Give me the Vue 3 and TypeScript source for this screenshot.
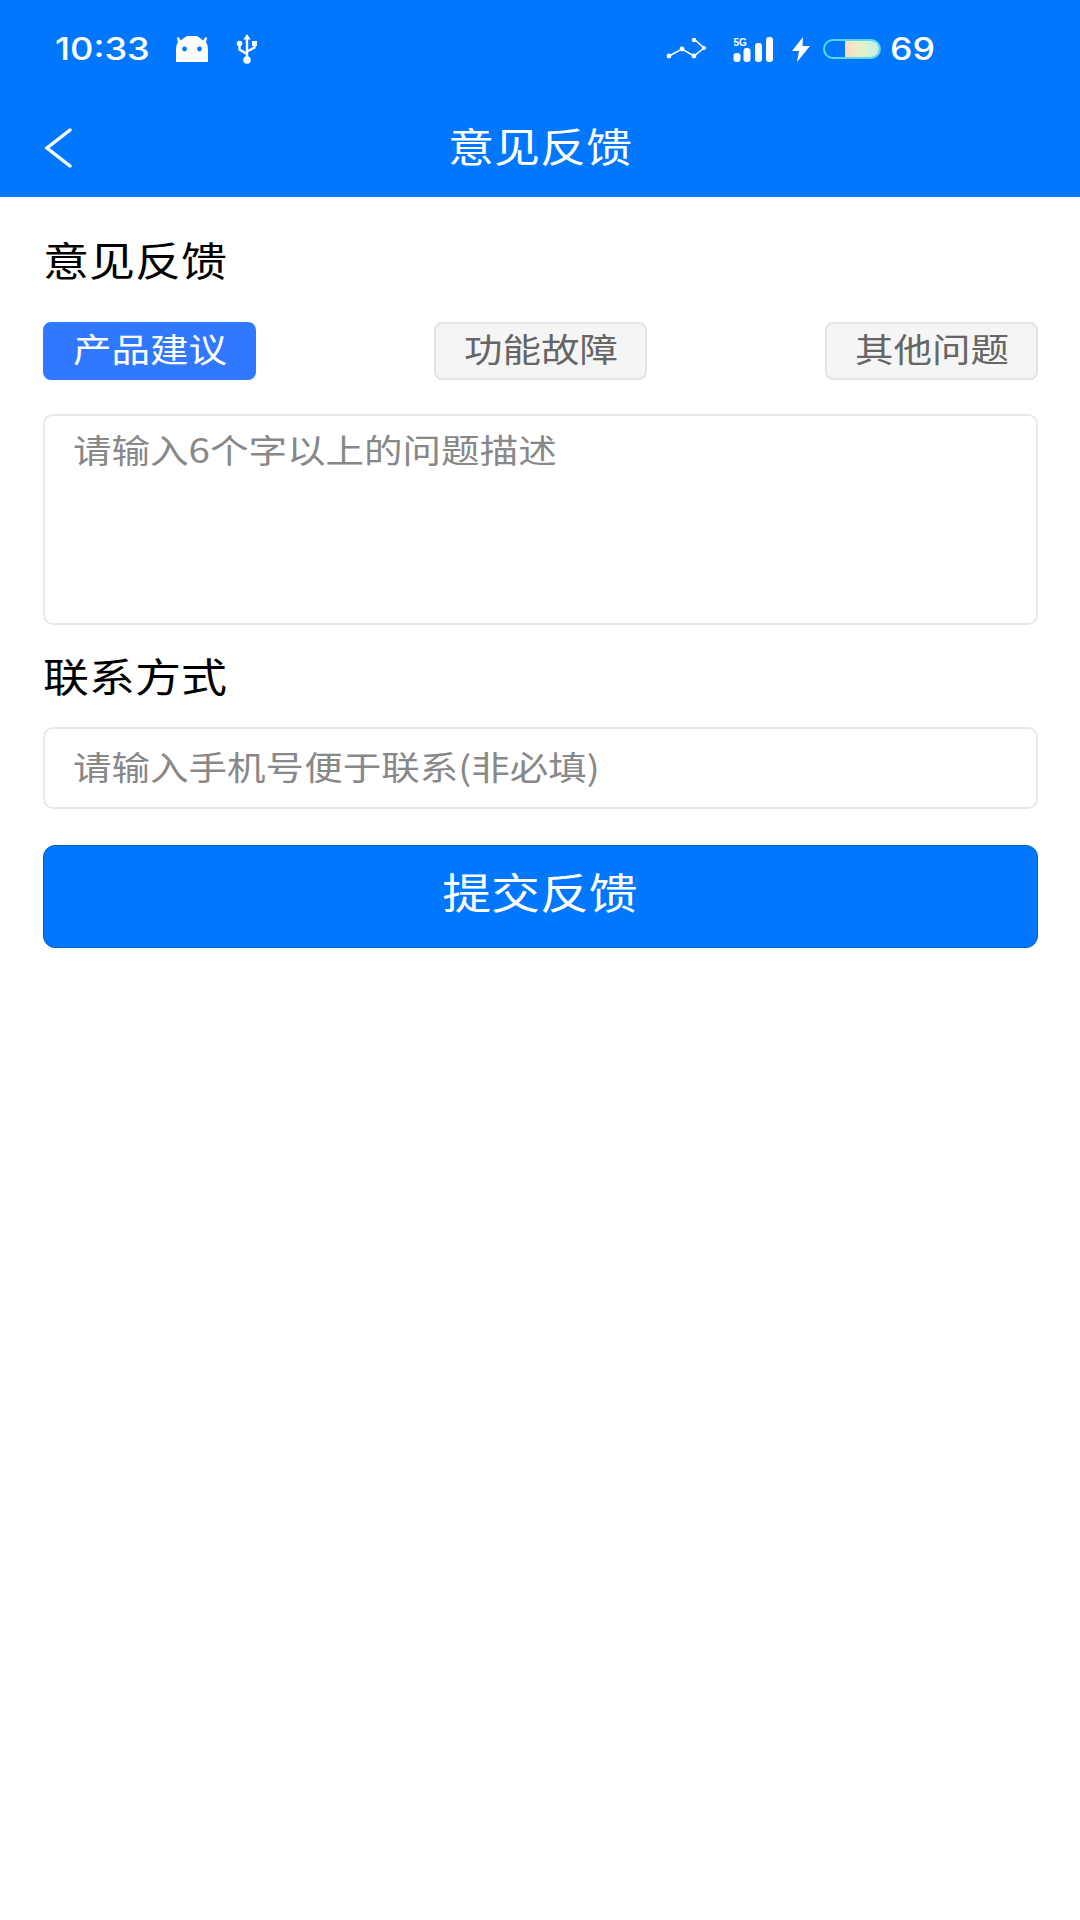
<script setup lang="ts">
import { ref } from "vue";

const tabs = ["产品建议", "功能故障", "其他问题"];
const active = ref(0);
</script>

<template>
  <div class="page">
    <header class="top">
      <div class="status">
        <span class="time">10:33</span>
        <svg class="ic-android" width="32" height="26" viewBox="0 0 32 26">
          <path d="M2 6 L0.8 2 L2.6 1 L5 4.6 A14 14 0 0 1 27 4.6 L29.4 1 L31.2 2 L30 6 Q32 9 32 13 L32 26 L0 26 L0 13 Q0 9 2 6 Z" fill="#fff" />
          <circle cx="8.5" cy="13" r="2.4" fill="#0177fe" />
          <circle cx="23.5" cy="13" r="2.4" fill="#0177fe" />
        </svg>
        <svg class="ic-usb" width="24" height="30" viewBox="0 0 24 30">
          <path d="M12 0 L15.6 5.5 L8.4 5.5 Z" fill="#fff" />
          <path d="M12 5 L12 25 M12 20 L4.5 15.5 L4.5 11 M12 17.5 L19.5 13.5 L19.5 11" stroke="#fff" stroke-width="2.4" fill="none" />
          <circle cx="4.5" cy="9.5" r="2.8" fill="#fff" />
          <rect x="17" y="7" width="5" height="5" fill="#fff" />
          <circle cx="12" cy="26" r="3.8" fill="#fff" />
        </svg>

        <div class="status-right">
          <svg class="ic-net" width="40" height="22" viewBox="0 0 40 22">
            <path d="M3 18 L16 11 L28 18 L38 10 L28 1" stroke="#fff" stroke-width="1.5" fill="none" />
            <circle cx="3" cy="18" r="2.4" fill="#fff" />
            <circle cx="16" cy="11" r="2.4" fill="#fff" />
            <circle cx="28" cy="18" r="2.4" fill="#fff" />
            <circle cx="38" cy="10" r="2" fill="#fff" />
            <circle cx="28" cy="2" r="2.2" fill="#fff" />
          </svg>
          <svg class="ic-signal" width="41" height="25" viewBox="0 0 41 25">
            <text x="0.5" y="8.5" class="fiveg">5G</text>
            <rect x="0.5" y="16" width="7" height="9" rx="3" fill="#fff" />
            <rect x="10.5" y="11" width="7" height="14" rx="3" fill="#fff" />
            <rect x="22" y="6" width="7" height="19" rx="3" fill="#fff" />
            <rect x="33" y="0" width="7" height="25" rx="3" fill="#fff" />
          </svg>
          <svg class="ic-bolt" width="18" height="25" viewBox="0 0 18 25">
            <path d="M11 0 L0 14 L7 14 L5 25 L18 9 L10.5 9 Z" fill="#fff" />
          </svg>
          <div class="battery"><div class="battery-fill"></div></div>
          <span class="level">69</span>
        </div>
      </div>
      <div class="nav">
        <svg class="back" width="28" height="40" viewBox="0 0 28 40">
          <path d="M26 2 L3 20 L26 38" stroke="#fff" stroke-width="3.4" stroke-linecap="round" stroke-linejoin="miter" fill="none" />
        </svg>
        <span class="nav-title wide-c">意见反馈</span>
      </div>
    </header>

    <main class="form">
      <div class="label"><span class="wide-l">意见反馈</span></div>
      <div class="tabs">
        <div
          v-for="(tab, i) in tabs"
          :key="tab"
          :class="['tab', { '--active': i === active }]"
          @click="active = i"
        >
          <span class="wide-c">{{ tab }}</span>
        </div>
      </div>
      <div class="field --area"><span class="wide-l">请输入6个字以上的问题描述</span></div>
      <div class="label --second"><span class="wide-l">联系方式</span></div>
      <div class="field --line"><span class="wide-l">请输入手机号便于联系(非必填)</span></div>
      <div class="submit"><span class="wide-c">提交反馈</span></div>
    </main>
  </div>
</template>

<style scoped>
.page {
  width: 1080px;
  height: 1920px;
  background: #fff;
  font-family: "Noto Sans CJK SC", "Noto Sans", sans-serif;
  overflow: hidden;
}

/* the reference is stretched sideways, so text is widened to fit */
.wide-l,
.wide-c,
.time,
.level {
  display: inline-block;
  white-space: nowrap;
}
.wide-l,
.wide-c {
  transform: translateY(-3px) scaleX(1.15);
}
.time,
.level {
  transform: scaleX(1.15);
  transform-origin: left center;
}
.wide-l {
  transform-origin: left center;
}
.wide-c {
  transform-origin: center;
}

.top {
  height: 197px;
  background: #0177fe;
  color: #fff;
}

.status {
  height: 98px;
  display: flex;
  align-items: center;
  padding-left: 55px;
  font-family: Inter, "Liberation Sans", sans-serif;
}

.time {
  width: 121px;
  font-size: 31.5px;
  font-weight: 500;
  line-height: 40px;
}

.ic-usb {
  margin-left: 27px;
}

.status-right {
  margin-left: auto;
  width: 414px;
  display: flex;
  align-items: center;
}

.ic-signal {
  margin-left: 27px;
}

.ic-bolt {
  margin-left: 18px;
}

.fiveg {
  font-family: "Liberation Sans", sans-serif;
  font-size: 10px;
  font-weight: 700;
  fill: #fff;
}

.battery {
  margin-left: 13px;
  width: 58px;
  height: 20px;
  box-sizing: border-box;
  border: 2px solid #5fd6e6;
  border-radius: 10px;
  overflow: hidden;
  display: flex;
  justify-content: flex-end;
}

.battery-fill {
  width: 34px;
  background: linear-gradient(90deg, #fbd9bf, #e8f0c8 40%, #c4f0e6);
}

.level {
  margin-left: 9px;
  font-size: 31px;
  font-weight: 500;
  line-height: 40px;
}

.nav {
  height: 99px;
  display: flex;
  align-items: center;
  justify-content: center;
  position: relative;
}

.back {
  position: absolute;
  left: 44px;
  top: 30px;
}

.nav-title {
  font-size: 40px;
  line-height: 50px;
}

.form {
  padding: 40px 42px 0 43px;
}

.label {
  height: 50px;
  font-size: 40px;
  line-height: 50px;
  color: #000;
}

.label.--second {
  margin-top: 28px;
}

.tabs {
  margin-top: 35px;
  display: flex;
  justify-content: space-between;
}

.tab {
  width: 213px;
  height: 58px;
  padding-bottom: 2px;
  box-sizing: border-box;
  border: 2px solid #e3e3e3;
  border-radius: 8px;
  background: #f5f5f5;
  color: #666;
  font-size: 33.5px;
  display: flex;
  align-items: center;
  justify-content: center;
}

.tab.--active {
  background: #2f78ff;
  border-color: #2f78ff;
  color: #fff;
}

.field {
  box-sizing: border-box;
  border: 2px solid #e8e8e8;
  border-radius: 10px;
  background: #fff;
  color: #888;
  font-size: 33.5px;
  padding-left: 28px;
}

.field.--area {
  margin-top: 34px;
  height: 211px;
  padding-top: 12px;
  line-height: 48px;
}

.field.--line {
  margin-top: 24px;
  height: 82px;
  display: flex;
  align-items: center;
}

.submit {
  margin-top: 36px;
  height: 103px;
  padding-bottom: 7px;
  box-sizing: border-box;
  border: 1px solid #0a60c0;
  border-radius: 12px;
  background: #0177fe;
  color: #fff;
  font-size: 42.5px;
  display: flex;
  align-items: center;
  justify-content: center;
}
</style>
